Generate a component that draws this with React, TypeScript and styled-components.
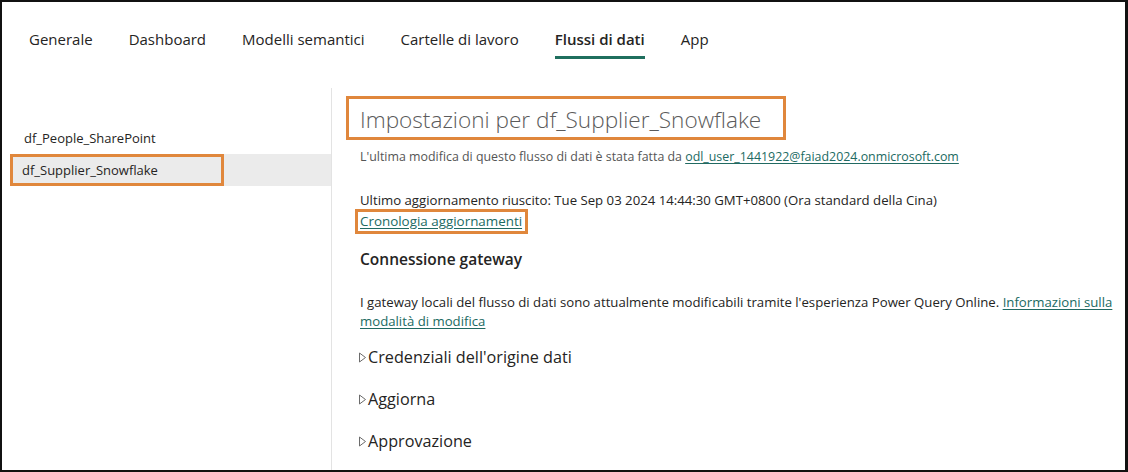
import React, { FC } from 'react';
import styled, { createGlobalStyle } from 'styled-components';

const GlobalStyle = createGlobalStyle`
  html, body {
    margin: 0;
    padding: 0;
    background: #ffffff;
  }
  body {
    font-family: 'Open Sans', 'Noto Sans', 'Liberation Sans', sans-serif;
    color: #252423;
  }
`;

const tabs = ['Generale', 'Dashboard', 'Modelli semantici', 'Cartelle di lavoro', 'Flussi di dati', 'App'];
const flows = ['df_People_SharePoint', 'df_Supplier_Snowflake'];
const sections = ["Credenziali dell'origine dati", 'Aggiorna', 'Approvazione'];

const Caret: FC = () => (
  <svg width="9" height="11" viewBox="0 0 9 11" aria-hidden="true">
    <polygon points="1.5,1 7.5,5.5 1.5,10" fill="none" stroke="#6b6b6b" strokeWidth="1" strokeLinejoin="round" />
  </svg>
);

const App: FC = () => {
  const selected = 'df_Supplier_Snowflake';

  return (
    <>
      <GlobalStyle />
      <Frame>
        <TabBar>
          {tabs.map((t) => (
            <Tab key={t} active={t === 'Flussi di dati'}>
              {t}
            </Tab>
          ))}
        </TabBar>
        <Main>
          <Sidebar>
            {flows.map((f) =>
              f === selected ? (
                <FlowItem key={f} selected>
                  <ItemMark>{f}</ItemMark>
                </FlowItem>
              ) : (
                <FlowItem key={f}>
                  <ItemText>{f}</ItemText>
                </FlowItem>
              )
            )}
          </Sidebar>
          <Content>
            <TitleMark>
              <Title>Impostazioni per df_Supplier_Snowflake</Title>
            </TitleMark>
            <Meta>
              L&apos;ultima modifica di questo flusso di dati è stata fatta da{' '}
              <Link href="#">odl_user_1441922@faiad2024.onmicrosoft.com</Link>
            </Meta>
            <Refresh>
              Ultimo aggiornamento riuscito: Tue Sep 03 2024 14:44:30 GMT+0800 (Ora standard della Cina)
            </Refresh>
            <HistoryMark>
              <Link href="#">Cronologia aggiornamenti</Link>
            </HistoryMark>
            <SectionHeading>Connessione gateway</SectionHeading>
            <Paragraph>
              I gateway locali del flusso di dati sono attualmente modificabili tramite l&apos;esperienza Power Query
              Online. <Link href="#">Informazioni sulla modalità di modifica</Link>
            </Paragraph>
            <Expanders>
              {sections.map((s) => (
                <Expander key={s}>
                  <Caret />
                  <span>{s}</span>
                </Expander>
              ))}
            </Expanders>
          </Content>
        </Main>
      </Frame>
    </>
  );
};

interface ActiveProp {
  active?: boolean;
}

interface SelectedProp {
  selected?: boolean;
}

const Frame = styled.div`
  box-sizing: border-box;
  width: 1128px;
  height: 472px;
  border: 2px solid #111;
  border-right-width: 3px;
  display: flex;
  flex-direction: column;
  overflow: hidden;
  background: #fff;
`;

const TabBar = styled.div`
  display: flex;
  gap: 36px;
  padding: 27px 0 0 27px;
  height: 59px;
  flex-shrink: 0;
`;

const Tab = styled.div<ActiveProp>`
  position: relative;
  font-size: 15px;
  line-height: 21px;
  height: 30px;
  color: #252423;
  font-weight: ${({ active }) => (active ? 600 : 400)};

  ${({ active }) =>
    active &&
    `
    &::after {
      content: '';
      position: absolute;
      left: 0;
      right: 0;
      bottom: 0;
      height: 3px;
      background: #1f6f5e;
    }
  `}
`;

const Main = styled.div`
  display: flex;
  flex: 1;
  min-height: 0;
`;

const Sidebar = styled.div`
  width: 329px;
  flex-shrink: 0;
  padding-top: 34px;
  border-right: 1px solid #e3e3e3;
`;

const FlowItem = styled.div<SelectedProp>`
  margin-left: 8px;
  height: 32px;
  display: flex;
  align-items: center;
  background: ${({ selected }) => (selected ? '#ebebeb' : 'transparent')};
`;

const ItemText = styled.span`
  padding-left: 14px;
  font-size: 13px;
  color: #252423;
`;

const ItemMark = styled.span`
  box-sizing: border-box;
  width: 214px;
  height: 32px;
  border: 3px solid #e0873c;
  padding-left: 9px;
  display: flex;
  align-items: center;
  font-size: 13px;
  color: #252423;
`;

const Content = styled.div`
  flex: 1;
  padding: 8px 0 0 28px;
  display: flex;
  flex-direction: column;
  align-items: flex-start;
`;

const TitleMark = styled.div`
  box-sizing: border-box;
  margin-left: -14px;
  height: 44px;
  width: 440px;
  border: 3px solid #e0873c;
  padding: 3px 0 0 11px;
  display: flex;
  align-items: center;
`;

const Title = styled.h1`
  margin: 0;
  font-size: 22.6px;
  font-weight: 300;
  color: #5b5b5b;
  white-space: nowrap;
`;

const Meta = styled.div`
  margin-top: 9px;
  font-size: 12.4px;
  line-height: 16px;
  color: #555;
  white-space: nowrap;
`;

const Link = styled.a`
  color: #216a62;
  text-decoration: underline;
  text-underline-offset: 2px;
`;

const Refresh = styled.div`
  margin-top: 26px;
  font-size: 13.2px;
  line-height: 18px;
  color: #252423;
  white-space: nowrap;
`;

const HistoryMark = styled.div`
  box-sizing: border-box;
  margin-left: -5px;
  height: 25px;
  border: 3px solid #e0873c;
  padding: 0 3px 1px 2px;
  display: flex;
  align-items: center;
  font-size: 13.4px;
  line-height: 17px;
`;

const SectionHeading = styled.h2`
  margin: 14px 0 0 0;
  font-size: 15.5px;
  line-height: 22px;
  font-weight: 600;
  color: #252423;
`;

const Paragraph = styled.p`
  margin: 23px 0 0 0;
  max-width: 760px;
  font-size: 13.2px;
  line-height: 19px;
  color: #252423;
`;

const Expanders = styled.div`
  margin-top: 15px;
  margin-left: -2px;
  display: flex;
  flex-direction: column;
  gap: 20px;
`;

const Expander = styled.div`
  display: flex;
  align-items: center;
  gap: 1px;
  height: 22px;
  font-size: 16.2px;
  color: #252423;
  cursor: pointer;
`;

export default App;
